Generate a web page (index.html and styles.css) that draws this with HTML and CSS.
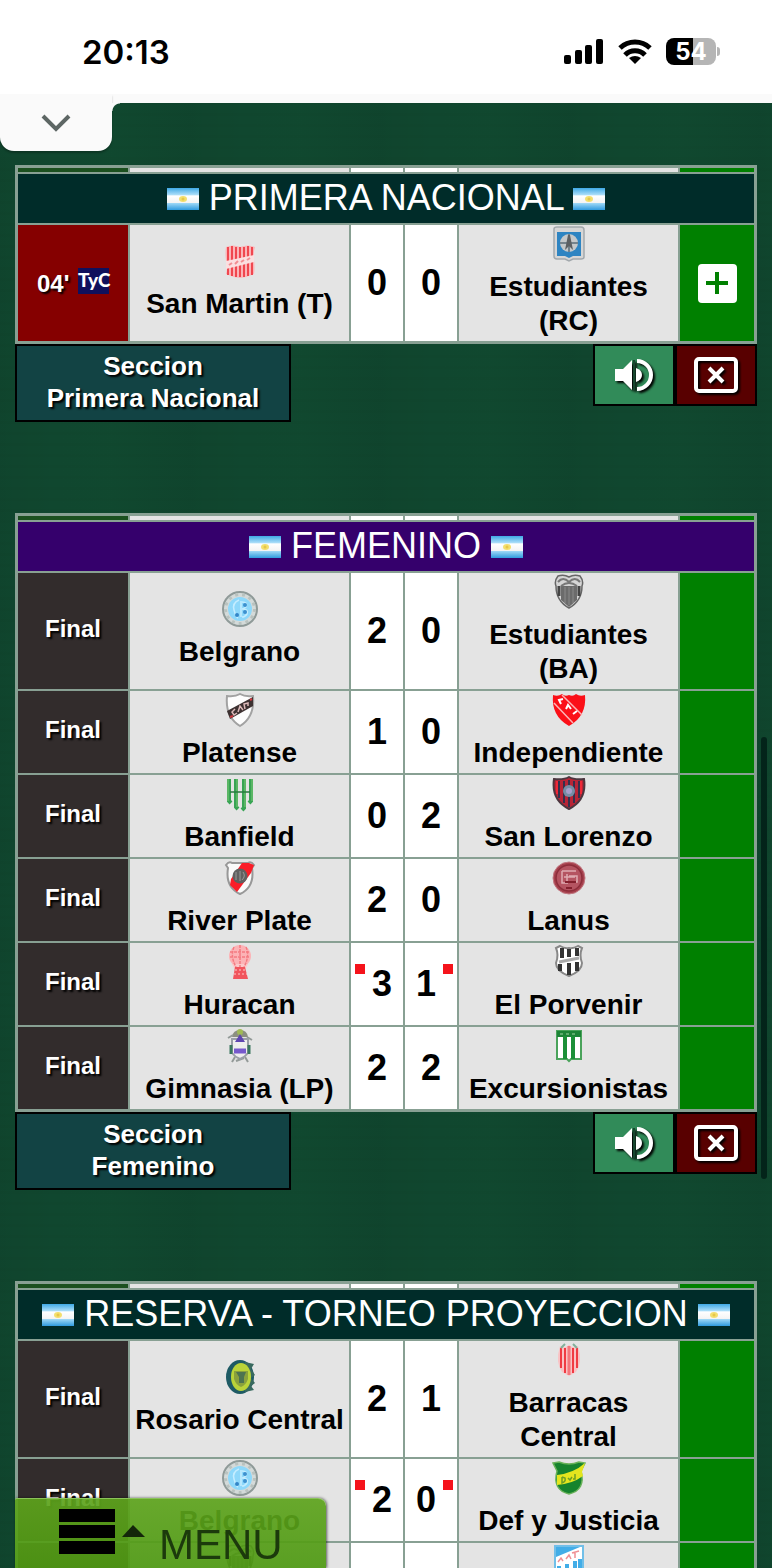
FILE: index.html
```html
<!DOCTYPE html>
<html lang="es">
<head>
  <meta charset="UTF-8" />
  <meta name="viewport" content="width=device-width, initial-scale=1.0"/>
  <title>Resultados</title>
  <link rel="stylesheet" href="styles.css">
</head>
<body>
  <!-- Icons and crests -->
  <svg class="defs" width="0" height="0" aria-hidden="true">
    <linearGradient id="sky" x1="0" y1="0" x2="0" y2="1">
      <stop offset="0" stop-color="#3fa9e6"/><stop offset=".3" stop-color="#a8dcf8"/>
      <stop offset=".36" stop-color="#fff"/><stop offset=".66" stop-color="#f4f4f4"/>
      <stop offset=".7" stop-color="#9ad6f6"/><stop offset="1" stop-color="#2f9ade"/>
    </linearGradient>
    <symbol id="flag" viewBox="0 0 32 22">
      <rect width="32" height="22" fill="url(#sky)"/>
      <ellipse cx="16" cy="11" rx="4" ry="3" fill="#f3df6e"/>
      <circle cx="16" cy="11" r="1.5" fill="#e6c64a"/>
    </symbol>
    <symbol id="sanmartin" viewBox="0 0 36 36">
      <path d="M4 4Q11 1 18 4Q26 1 33 4Q31 10 32 17Q33 25 32 31Q26 34 18 35Q10 34 4 31Q6 25 4 17Q3 10 4 4Z" fill="#fbb4b7"/>
      <path d="M6 4V32M10 3V33M14 4V34M18 4V34M22 4V34M26 3V33M30 4V32" stroke="#f0474f" stroke-width="2"/>
      <path d="M4 18L32 12V19L4 26Z" fill="#fbdfe0"/>
      <path d="M7 22L10 20M13 21L16 18M19 19L22 17M25 17L28 15" stroke="#f28e92" stroke-width="2"/>
    </symbol>
    <symbol id="estudiantesrc" viewBox="0 0 36 36">
      <path d="M3 3Q3 1 6 1H30Q33 1 33 4V31Q33 33 30 33H22L18 35L14 33H6Q3 33 3 30Z" fill="#d6d6d6" stroke="#a3a9ad" stroke-width="1.5"/>
      <path d="M6 6H30V30H22L18 32L14 30H6Z" fill="#2d84c2"/>
      <circle cx="18" cy="17" r="9" fill="#c4c8ca"/>
      <path d="M18 8V26M9 17H27" stroke="#75838c" stroke-width="2"/>
      <path d="M14 24L17 9H19L22 24L18 20Z" fill="#5c6063"/>
    </symbol>
    <symbol id="belgrano" viewBox="0 0 36 36">
      <circle cx="18" cy="18" r="17" fill="#d4dad9" stroke="#8f9a98" stroke-width="2"/>
      <circle cx="18" cy="18" r="14.5" fill="none" stroke="#b9c2bf" stroke-width="3" stroke-dasharray="3 4"/>
      <circle cx="18" cy="18" r="12" fill="#8ed8fa"/>
      <path d="M17 9Q10 12 12 19T16 27M19 10V26M20 11Q26 11 24 16Q21 18 20 18Q27 18 25 23Q23 26 20 26" fill="none" stroke="#c4edff" stroke-width="1.5"/>
      <circle cx="23" cy="14" r="2" fill="#3d91cf"/><circle cx="23" cy="21" r="2" fill="#3d91cf"/><circle cx="15" cy="24" r="2" fill="#3386c8"/>
    </symbol>
    <symbol id="estudiantesba" viewBox="0 0 36 36">
      <path d="M7 2Q13 0 18 3Q23 0 29 2Q33 7 31 12Q31 27 18 34Q5 27 5 12Q3 7 7 2Z" fill="#d5d5d5" stroke="#666" stroke-width="1.5"/>
      <path d="M10 12H26V26L18 33L10 26Z" fill="#6b6b6b"/>
      <path d="M8 12V22M28 12V22" stroke="#444" stroke-width="3"/>
      <path d="M14 13V29M18 13V31M22 13V29" stroke="#8b8b8b" stroke-width="1"/>
      <path d="M7 8Q12 2 18 8Q24 2 29 8M10 12Q18 6 26 12" fill="none" stroke="#777" stroke-width="2"/>
    </symbol>
    <symbol id="platense" viewBox="0 0 36 36">
      <path d="M18 2Q23 5 31 4Q33 25 18 34Q3 25 5 4Q13 5 18 2Z" fill="#fdfdfd" stroke="#a2a2a2" stroke-width="2"/>
      <path d="M5 19L31 5V14L8 27Z" fill="#3d3131"/>
      <path d="M13 17L10 20L12 23L15 21M16 20L18 14L21 18M23 17L22 12L26 11L26 14" fill="none" stroke="#dcb9b9" stroke-width="1.500"/>
      <path d="M8 25L11 24M28 8L30 7" stroke="#d23a40" stroke-width="2"/>
    </symbol>
    <symbol id="independiente" viewBox="0 0 36 36">
      <path d="M2 3Q7 5 11 2Q14 5 18 3Q22 5 25 2Q29 5 34 3Q36 24 18 34Q0 24 2 3Z" fill="#fb1018"/>
      <path d="M3 11L22 31M11 3L31 23" stroke="#fbb5b7" stroke-width="1.5"/>
      <path d="M12 7L8 8L10 12M15 17L17 13L20 17M22 22L26 19" fill="none" stroke="#fff" stroke-width="2"/>
    </symbol>
    <symbol id="banfield" viewBox="0 0 36 36">
      <path d="M7 3V25L9 27M14 3V31L16 33M22 3V32L20 34M29 3V25L27 27" fill="none" stroke="#38a454" stroke-width="4"/>
      <path d="M6 3V25M15 3V31M23 3V31M30 3V25" stroke="#7fc977" stroke-width="1"/>
      <path d="M8 16H28" stroke="#277a3f" stroke-width="1.5"/>
    </symbol>
    <symbol id="sanlorenzo" viewBox="0 0 36 36">
      <path d="M18 1Q23 4 33 3Q36 24 18 33Q0 24 3 3Q13 4 18 1Z" fill="#b82436" stroke="#4c3740" stroke-width="2"/>
      <path d="M8 5V22M13 5V27M18 4V31M23 5V27M28 5V22" stroke="#34304d" stroke-width="2"/>
      <circle cx="18" cy="15" r="6" fill="#758ea5"/><circle cx="18" cy="15" r="3" fill="#a6a0cc"/>
      <path d="M6 5V18M30 5V18" stroke="#ef2837" stroke-width="2"/>
    </symbol>
    <symbol id="river" viewBox="0 0 36 36">
      <path d="M4 5Q7 1 10 3H26Q29 1 32 5L30 8Q33 27 18 34Q3 27 6 8Z" fill="#fafafa" stroke="#989898" stroke-width="2"/>
      <path d="M20 3H27L32 5L29 13L15 32L8 25L9 19Z" fill="#fa1d28"/>
      <circle cx="18" cy="16" r="7.500" fill="#606060"/>
      <path d="M14 12V20M18 11V21M21 12Q24 16 20 20" fill="none" stroke="#999" stroke-width="1"/>
    </symbol>
    <symbol id="lanus" viewBox="0 0 36 36">
      <circle cx="18" cy="18" r="16" fill="#a6404d" stroke="#c27a83"/>
      <circle cx="18" cy="18" r="13" fill="#b55461" stroke="#8d2e3b" stroke-width="1.5"/>
      <path d="M11 11H25M11 11V23H17M16 14V22H26V16H18M13 17H24" fill="none" stroke="#dfaab1" stroke-width="1.500"/>
      <path d="M14 22H25M15 28H21" stroke="#83202d" stroke-width="2"/>
    </symbol>
    <symbol id="huracan" viewBox="0 0 36 36">
      <circle cx="18" cy="12" r="11" fill="#fcb3b6"/>
      <path d="M10 20L13 26H23L26 20Z" fill="#fbc9ca"/>
      <path d="M18 1V25M12 3Q8 12 14 23M24 3Q28 12 22 23M8 8H28M8 13H28" fill="none" stroke="#f47b81" stroke-width="1.5" stroke-dasharray="3 1"/>
      <path d="M13 23H23L26 35H11Z" fill="#f1555d"/><path d="M12 30H25M13 26H23" stroke="#fcc" stroke-dasharray="2 2"/>
    </symbol>
    <symbol id="elporvenir" viewBox="0 0 36 36">
      <path d="M5 4L9 2Q14 5 18 4Q22 5 27 2L31 4Q28 11 31 19Q31 27 18 32Q5 27 5 19Q8 11 5 4Z" fill="#fff" stroke="#888" stroke-width="2"/>
      <path d="M11 4V14M18 5V13M26 4V12M9 20V27M18 19V31M26 18V27" stroke="#333" stroke-width="4"/>
      <path d="M8 18L28 14" stroke="#aaa" stroke-width="3"/>
    </symbol>
    <symbol id="gimnasia" viewBox="0 0 36 36">
      <path d="M10 9Q11 2 18 2T26 9Z" fill="#8b8f80"/><circle cx="18" cy="4" r="3" fill="#a0ba55"/>
      <path d="M6 10L11 7M30 12L25 9M13 29L10 34M23 29L26 34M14 33L22 30" stroke="#939a98" stroke-width="2"/>
      <path d="M10 11H26V25Q23 29 18 31Q13 29 10 25Z" fill="#eee" stroke="#9a9fa8" stroke-width="2"/>
      <path d="M13 14L18 6L23 14Z" fill="#5e45b0"/><path d="M12 23H24" stroke="#7659cc" stroke-width="5"/>
      <path d="M9 17V26M27 17V26" stroke="#3a765e" stroke-width="3"/>
    </symbol>
    <symbol id="excursionistas" viewBox="0 0 36 36">
      <path d="M6 3H30V31H20L18 33L16 31H6Z" fill="#fff" stroke="#4aa35b" stroke-width="2"/>
      <rect x="6" y="3" width="24" height="6" fill="#1d8437"/>
      <path d="M14 8V31M22 8V31" stroke="#1c9038" stroke-width="4"/>
      <path d="M9 6H27" stroke="#74bb80" stroke-width="1.500" stroke-dasharray="3 3"/>
    </symbol>
    <symbol id="rosario" viewBox="0 0 36 36">
      <ellipse cx="18" cy="18" rx="14" ry="17" fill="#1e5a64"/>
      <path d="M23 3L32 5L29 10L33 16L29 19L33 24L29 27L32 31L23 33Z" fill="#38695f"/>
      <ellipse cx="19" cy="18" rx="10" ry="14" fill="#bad339"/>
      <path d="M12 12H26V20Q24 26 19 28Q14 26 12 20Z" fill="#8aa13c"/><path d="M14 13H24L22 18V24H17V18Z" fill="#4d7350"/>
    </symbol>
    <symbol id="barracas" viewBox="0 0 36 36">
      <path d="M9 4Q14 7 18 3Q22 7 27 4Q32 20 25 30L18 34L11 30Q4 20 9 4Z" fill="#f9c2c4"/>
      <path d="M10 6V26M14 6V31M22 6V31M26 6V26" stroke="#f03b43" stroke-width="2"/>
      <path d="M18 4V33" stroke="#f4767b" stroke-width="3"/>
      <path d="M10 6L14 2M26 6L22 2" stroke="#83b19b" stroke-width="2"/>
    </symbol>
    <symbol id="defyjusticia" viewBox="0 0 36 36">
      <path d="M2 3L8 2Q18 6 28 2L34 3L30 11Q35 30 18 34Q1 30 6 11Z" fill="#16832d" stroke="#68b258" stroke-width="1.500"/>
      <path d="M6 15Q23 13 34 3L31 12L32 16Q21 24 6 25Z" fill="#e4e51e"/>
      <path d="M11 17V23Q15 22 14 18L11 17M17 18L19 20L21 17M24 14V19L22 19" fill="none" stroke="#6d9f25" stroke-width="1.500"/>
    </symbol>
    <symbol id="tucuman" viewBox="0 0 36 36">
      <path d="M4 2H32V24Q29 31 18 35Q7 31 4 24Z" fill="#fff" stroke="#71bfe8" stroke-width="2"/>
      <path d="M5 3H29L5 13Z" fill="#42ade7"/><path d="M8 22V29M16 20V33M24 17V31M29 15V27" stroke="#42ade7" stroke-width="4"/>
      <path d="M7 18L10 14L12 17M15 15L18 11L20 15M24 8V14M21 9L28 7" fill="none" stroke="#ef9095" stroke-width="1.500"/>
    </symbol>
    <symbol id="speaker" viewBox="0 0 40 36">
      <path d="M1 12H9L18 3V33L9 24H1Z" fill="currentColor"/>
      <path d="M20 3V33" stroke="#17482f" stroke-width="2"/>
      <path d="M22 11Q28 13 28 18T22 25Z" fill="currentColor"/>
      <path d="M23 4A14 14 0 0 1 23 32" fill="none" stroke="currentColor" stroke-width="4"/>
    </symbol>
    <symbol id="close" viewBox="0 0 44 36">
      <rect x="2" y="2" width="40" height="32" rx="3" fill="none" stroke="currentColor" stroke-width="4"/>
      <path d="M15 11L29 25M29 11L15 25" stroke="currentColor" stroke-width="4"/>
    </symbol>
  </svg>

  <!-- Status bar -->
  <header class="status">
    <time>20:13</time>
    <div class="status-icons">
      <svg width="40" height="26" viewBox="0 0 40 26"><rect x="0" y="16" width="7" height="9" rx="2"/><rect x="11" y="11" width="7" height="14" rx="2"/><rect x="21" y="6" width="7" height="19" rx="2"/><rect x="32" y="0" width="7" height="25" rx="2"/></svg>
      <svg width="34" height="26" viewBox="0 0 34 26"><path d="M2 9A22 22 0 0 1 32 9M7 16A14 14 0 0 1 27 16" fill="none" stroke="#000" stroke-width="5"/><path d="M11 19Q17 15 23 19L17 25Z"/></svg>
      <div class="battery">54</div>
    </div>
  </header>
  <div class="toolbar">
    <button class="tab" aria-label="Desplegar">
      <svg width="30" height="18" viewBox="0 0 30 18"><path d="M2 2L15 15L28 2" fill="none" stroke="#5d6664" stroke-width="4"/></svg>
    </button>
  </div>

  <main>
    <section class="league">
      <table>
        <colgroup><col class="c-time"><col><col class="c-goal"><col class="c-goal"><col><col class="c-more"></colgroup>
        <thead>
          <tr class="strip"><td></td><td></td><td></td><td></td><td></td><td></td></tr>
          <tr><th colspan="6"><svg class="flag"><use href="#flag"/></svg> PRIMERA NACIONAL <svg class="flag"><use href="#flag"/></svg></th></tr>
        </thead>
        <tbody>
          <tr>
            <td class="time live">04' <span class="tyc">TyC</span></td>
            <td class="team"><svg class="crest"><use href="#sanmartin"/></svg>San Martin (T)</td>
            <td class="goal">0</td>
            <td class="goal">0</td>
            <td class="team"><svg class="crest"><use href="#estudiantesrc"/></svg>Estudiantes (RC)</td>
            <td class="more"><button class="plus" aria-label="Ver mas"><svg width="22" height="22" viewBox="0 0 22 22"><path d="M11 0V22M0 11H22" stroke="#008000" stroke-width="4"/></svg></button></td>
          </tr>
        </tbody>
      </table>
      <div class="actions">
        <a class="section-link" href="#">Seccion<br>Primera Nacional</a>
        <button class="action sound" aria-label="Sonido"><svg width="40" height="36"><use href="#speaker"/></svg></button>
        <button class="action hide" aria-label="Cerrar"><svg width="44" height="36"><use href="#close"/></svg></button>
      </div>
    </section>

    <section class="league">
      <table>
        <colgroup><col class="c-time"><col><col class="c-goal"><col class="c-goal"><col><col class="c-more"></colgroup>
        <thead>
          <tr class="strip"><td></td><td></td><td></td><td></td><td></td><td></td></tr>
          <tr><th colspan="6" class="purple"><svg class="flag"><use href="#flag"/></svg> FEMENINO <svg class="flag"><use href="#flag"/></svg></th></tr>
        </thead>
        <tbody>
          <tr>
            <td class="time">Final</td>
            <td class="team"><svg class="crest"><use href="#belgrano"/></svg>Belgrano</td>
            <td class="goal">2</td>
            <td class="goal">0</td>
            <td class="team"><svg class="crest"><use href="#estudiantesba"/></svg>Estudiantes (BA)</td>
            <td class="more"></td>
          </tr>
          <tr>
            <td class="time">Final</td>
            <td class="team"><svg class="crest"><use href="#platense"/></svg>Platense</td>
            <td class="goal">1</td>
            <td class="goal">0</td>
            <td class="team"><svg class="crest"><use href="#independiente"/></svg>Independiente</td>
            <td class="more"></td>
          </tr>
          <tr>
            <td class="time">Final</td>
            <td class="team"><svg class="crest"><use href="#banfield"/></svg>Banfield</td>
            <td class="goal">0</td>
            <td class="goal">2</td>
            <td class="team"><svg class="crest"><use href="#sanlorenzo"/></svg>San Lorenzo</td>
            <td class="more"></td>
          </tr>
          <tr>
            <td class="time">Final</td>
            <td class="team"><svg class="crest"><use href="#river"/></svg>River Plate</td>
            <td class="goal">2</td>
            <td class="goal">0</td>
            <td class="team"><svg class="crest"><use href="#lanus"/></svg>Lanus</td>
            <td class="more"></td>
          </tr>
          <tr>
            <td class="time">Final</td>
            <td class="team"><svg class="crest"><use href="#huracan"/></svg>Huracan</td>
            <td class="goal"><div class="carded"><i class="red-card"></i>3</div></td>
            <td class="goal"><div class="carded away">1<i class="red-card"></i></div></td>
            <td class="team"><svg class="crest"><use href="#elporvenir"/></svg>El Porvenir</td>
            <td class="more"></td>
          </tr>
          <tr>
            <td class="time">Final</td>
            <td class="team"><svg class="crest"><use href="#gimnasia"/></svg>Gimnasia (LP)</td>
            <td class="goal">2</td>
            <td class="goal">2</td>
            <td class="team"><svg class="crest"><use href="#excursionistas"/></svg>Excursionistas</td>
            <td class="more"></td>
          </tr>
        </tbody>
      </table>
      <div class="actions">
        <a class="section-link" href="#">Seccion<br>Femenino</a>
        <button class="action sound" aria-label="Sonido"><svg width="40" height="36"><use href="#speaker"/></svg></button>
        <button class="action hide" aria-label="Cerrar"><svg width="44" height="36"><use href="#close"/></svg></button>
      </div>
    </section>

    <section class="league">
      <table>
        <colgroup><col class="c-time"><col><col class="c-goal"><col class="c-goal"><col><col class="c-more"></colgroup>
        <thead>
          <tr class="strip"><td></td><td></td><td></td><td></td><td></td><td></td></tr>
          <tr><th colspan="6"><svg class="flag"><use href="#flag"/></svg> RESERVA - TORNEO PROYECCION <svg class="flag"><use href="#flag"/></svg></th></tr>
        </thead>
        <tbody>
          <tr>
            <td class="time">Final</td>
            <td class="team"><svg class="crest"><use href="#rosario"/></svg>Rosario Central</td>
            <td class="goal">2</td>
            <td class="goal">1</td>
            <td class="team"><svg class="crest"><use href="#barracas"/></svg>Barracas Central</td>
            <td class="more"></td>
          </tr>
          <tr>
            <td class="time">Final</td>
            <td class="team"><svg class="crest"><use href="#belgrano"/></svg>Belgrano</td>
            <td class="goal"><div class="carded"><i class="red-card"></i>2</div></td>
            <td class="goal"><div class="carded away">0<i class="red-card"></i></div></td>
            <td class="team"><svg class="crest"><use href="#defyjusticia"/></svg>Def y Justicia</td>
            <td class="more"></td>
          </tr>
          <tr>
            <td class="time"></td>
            <td class="team"><svg class="crest"><use href="#estudiantesba"/></svg></td>
            <td class="goal"></td>
            <td class="goal"></td>
            <td class="team"><svg class="crest"><use href="#tucuman"/></svg></td>
            <td class="more"></td>
          </tr>
        </tbody>
      </table>
    </section>
  </main>

  <div class="scroll-thumb"></div>

  <button class="menu">
    <svg width="86" height="46" viewBox="0 0 86 46"><path d="M0 0H56V13H0ZM0 16H56V29H0ZM0 32H56V45H0Z"/><path d="M63 28L74 16L86 28Z" fill="#14260a"/></svg>
    <span>MENU</span>
  </button>
</body>
</html>
```

FILE: styles.css
```css
* {
  box-sizing: border-box;
}
body {
  margin: 0;
  height: 100vh;
  overflow: hidden;
  font-family: "Liberation Sans", Arial, sans-serif;
  background-color: #10472f;
  background-image:
    repeating-linear-gradient(90deg, rgba(0, 0, 0, 0.04) 0, transparent 60px, rgba(20, 90, 50, 0.06) 110px, rgba(0, 0, 0, 0.04) 190px),
    repeating-linear-gradient(0deg, rgba(0, 0, 0, 0.02) 0 3px, transparent 3px 11px);
}
button {
  border: 0;
  padding: 0;
  font-family: inherit;
}
svg {
  display: block;
}
.defs {
  position: absolute;
}

/* Status bar */
.status {
  display: flex;
  justify-content: space-between;
  align-items: center;
  height: 94px;
  padding: 9px 56px 0 82px;
  background: #fff;
}
.status time {
  font: 600 33px/40px Inter, sans-serif;
}
.status-icons {
  display: flex;
  align-items: center;
  gap: 14px;
}
.battery {
  position: relative;
  width: 50px;
  height: 27px;
  border-radius: 8px;
  background: linear-gradient(90deg, #000 54%, #b5b5b5 54%);
  color: #fff;
  font: 700 24px/27px Inter, sans-serif;
  text-align: center;
}
.battery::after {
  content: "";
  position: absolute;
  left: 51px;
  top: 9px;
  width: 3px;
  height: 9px;
  border-radius: 0 4px 4px 0;
  background: #b5b5b5;
}
.toolbar {
  position: relative;
  height: 9px;
  background: #fafafa;
}
.tab {
  position: absolute;
  left: 0;
  top: 0;
  display: flex;
  justify-content: center;
  align-items: center;
  width: 112px;
  height: 57px;
  border-radius: 0 0 14px 14px;
  background: #fafafa;
  box-shadow: 0 2px 2px rgba(0, 0, 0, 0.25);
  clip-path: inset(0 -10px -5px 0);
}
.tab::after {
  content: "";
  position: absolute;
  left: 112px;
  top: 9px;
  width: 8px;
  height: 8px;
  background: radial-gradient(circle at 100% 100%, transparent 7px, #fafafa 8px);
}

/* Leagues */
main {
  padding: 62px 15px 0;
}
.league {
  margin-bottom: 91px;
}
table {
  width: 100%;
  table-layout: fixed;
  border: 1px solid #88a093;
  border-spacing: 2px;
  background: #88a093;
}
.c-time {
  width: 110px;
}
.c-goal {
  width: 52px;
}
.c-more {
  width: 74px;
}
td, th {
  padding: 0;
  text-align: center;
  vertical-align: middle;
}
th {
  padding-bottom: 2px;
  background: #002c29;
  color: #fff;
  font-size: 36px;
  font-weight: normal;
  line-height: 47px;
  white-space: nowrap;
}
th.purple {
  background: #35006c;
}
.flag {
  display: inline-block;
  width: 32px;
  height: 22px;
}
.strip td {
  height: 4px;
  background: #e4e4e4;
}
.strip td:first-child {
  background: #1b501f;
}
.strip td:nth-child(3), .strip td:nth-child(4) {
  background: #fff;
}
.strip td:last-child, .more {
  background: #008000;
}
.time {
  background: #322c2c;
  color: #fff;
  font-size: 24px;
  font-weight: bold;
  line-height: 28px;
  padding-bottom: 4px;
  text-shadow: 2px 2px 2px #000;
}
.live {
  background: #850000;
  padding-bottom: 0;
}
.tyc {
  display: inline-block;
  width: 31px;
  height: 26px;
  margin-left: 2px;
  background: #10105c;
  font: 900 19px/24px Lato, sans-serif;
  text-align: center;
  text-shadow: none;
  vertical-align: 5px;
}
.team {
  padding: 1px 4px 3px;
  background: #e4e4e4;
  font-size: 28px;
  font-weight: bold;
  line-height: 34px;
}
.crest {
  width: 36px;
  height: 36px;
  margin: 0 auto 8px;
}
.goal {
  background: #fff;
  font-size: 36px;
  font-weight: bold;
  line-height: 40px;
}
.carded {
  display: flex;
  justify-content: flex-start;
  gap: 7px;
  padding: 0 4px;
}
.carded.away {
  justify-content: flex-end;
}
.red-card {
  width: 10px;
  height: 10px;
  background: #f5131b;
}
.plus {
  display: inline-flex;
  justify-content: center;
  align-items: center;
  width: 39px;
  height: 39px;
  border-radius: 4px;
  background: #fff;
  vertical-align: middle;
}

/* Buttons under each table */
.actions {
  display: flex;
  align-items: flex-start;
}
.section-link {
  width: 276px;
  margin-right: auto;
  padding: 4px 0 6px;
  border: 2px solid #000;
  background: #124344;
  color: #fff;
  font-size: 26px;
  font-weight: bold;
  line-height: 32px;
  text-align: center;
  text-decoration: none;
  text-shadow: 2px 2px 2px #000;
}
.action {
  display: flex;
  justify-content: center;
  align-items: center;
  width: 82px;
  height: 62px;
  border: 2px solid #000;
  color: #fff;
}
.action svg {
  filter: drop-shadow(2px 2px 1px #000);
}
.sound {
  background: #318b59;
}
.hide {
  background: #580000;
}

/* Overlays */
.scroll-thumb {
  position: fixed;
  right: 5px;
  top: 47%;
  width: 6px;
  height: 442px;
  border-radius: 3px;
  background: rgba(0, 25, 20, 0.75);
}
.menu {
  position: fixed;
  left: 15px;
  bottom: 0;
  display: flex;
  align-items: flex-start;
  gap: 14px;
  width: 311px;
  height: 70px;
  padding: 10px 0 0 44px;
  border-top: 1px solid #8bc35a;
  border-radius: 2px 8px 0 0;
  background: linear-gradient(rgba(93, 163, 28, 0.92), rgba(78, 153, 18, 0.92));
  box-shadow: 1px 0 3px rgba(0, 0, 0, 0.6);
  color: #1c3a0c;
  font-size: 42px;
  line-height: 48px;
}
.menu span {
  padding-top: 12px;
}
```
